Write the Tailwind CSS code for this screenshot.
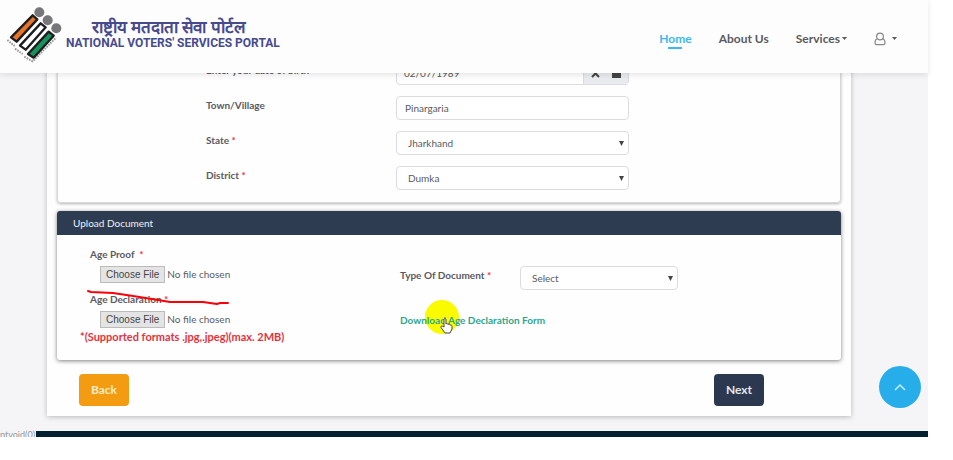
<!DOCTYPE html>
<html lang="en">
<head>
    <meta charset="UTF-8">
    <meta name="viewport" content="width=device-width, initial-scale=1.0">
    <script src="https://cdn.jsdelivr.net/npm/@tailwindcss/browser@4"></script>
    <title>National Voters' Services Portal</title>
</head>
<body class="bg-white pr-[25px] font-['Lato',sans-serif] text-[10px] text-[#5a5a60]">
    <div class="relative">
        <!-- Header -->
        <header class="relative z-10 flex h-[73px] items-center justify-between bg-[#fdfdfe] pr-[31px] pl-1 shadow-[0_2px_6px_rgba(0,0,0,0.1)]">
            <a href="#" class="flex items-center pb-1">
                <svg class="h-[63px] w-[62px]" viewBox="12 8 186 189" aria-hidden="true">
                    <g fill="none" stroke="#999" stroke-width="6" stroke-dasharray="5 3">
                        <path d="M22 119 L44 137"/>
                        <path d="M45 145 L68 161"/>
                        <path d="M73 169 L98 183 L168 112"/>
                    </g>
                    <g stroke="#1d1d1f" stroke-width="7" stroke-linejoin="round">
                        <path d="M98 45 L112 57 L50 124 L33 111Z" fill="#e8742a"/>
                        <path d="M122 69 L137 81 L77 148 L60 136Z" fill="#fff"/>
                        <path d="M146 94 L161 106 L101 172 L84 161Z" fill="#16935a"/>
                    </g>
                    <g fill="#77777b">
                        <circle cx="118" cy="36" r="15"/>
                        <circle cx="143" cy="60" r="15"/>
                        <circle cx="169" cy="84" r="15"/>
                    </g>
                </svg>
                <span class="flex flex-col pb-1 text-[#474b8e]">
                    <span lang="hi" class="pl-[26px] text-[17px] leading-5 font-semibold">राष्ट्रीय मतदाता सेवा पोर्टल</span>
                    <span class="font-['Liberation_Sans_Narrow','Roboto',sans-serif] text-[12px] leading-3 font-bold">NATIONAL VOTERS' SERVICES PORTAL</span>
                </span>
            </a>
            <nav class="flex items-center gap-[27px] pt-1 text-[12px] font-bold text-[#5a5a5e]">
                <a href="#" class="relative text-[#3db8ee]">Home<span class="absolute -bottom-px left-1/2 h-[2px] w-[14px] -translate-x-1/2 bg-[#3db8ee]"></span></a>
                <a href="#">About Us</a>
                <a href="#" class="flex items-center gap-[2px]">Services<svg class="h-[3px] w-[5px]" viewBox="0 0 5 3" fill="currentColor"><path d="M0 0h5L2.500 3z"/></svg></a>
                <a href="#" aria-label="Account" class="flex items-center gap-[6px]">
                    <svg class="h-[14px] w-[12px]" viewBox="0 0 12 14" fill="none" stroke="#888" stroke-width="1.200"><circle cx="6" cy="4.500" r="3.400"/><path d="M3 7C1.500 7.500 1 9 1 11c0 1 .6 1.700 1.500 1.700h7c.9 0 1.500-.7 1.500-1.700 0-2-.5-3.500-2-4"/></svg>
                    <svg class="h-[3px] w-[5px]" viewBox="0 0 5 3" fill="currentColor"><path d="M0 0h5L2.500 3z"/></svg>
                </a>
            </nav>
        </header>

        <main class="bg-[#f5f4f7] pr-[77px] pb-[15px] pl-[47px]">
            <form class="bg-[#fefefe] px-[10px] pb-[10px] shadow-[0_1px_5px_rgba(0,0,0,0.25)]">
                <!-- Address -->
                <section class="-mt-3 flex flex-col gap-[11px] rounded-b border border-t-0 border-[#d8d8da] pb-3 shadow-[0_1px_3px_rgba(0,0,0,0.3)]">
                    <div class="grid grid-cols-[148fr_190fr_233fr_211fr] items-start">
                        <label for="dob" class="col-start-2 leading-[18px] font-bold">Enter your date of birth</label>
                        <div class="flex h-6 rounded-sm border border-[#dcdce0]">
                            <input id="dob" type="text" value="02/07/1989" class="w-full min-w-0 px-[7px]">
                            <span class="flex items-center gap-3 border-l border-[#dcdce0] bg-[#e9ebee] px-[7px] text-[#444]">
                                <svg class="h-[9px] w-[9px]" viewBox="0 0 9 9" stroke="currentColor" stroke-width="2"><path d="M1 1l7 7M8 1L1 8"/></svg>
                                <svg class="h-[9px] w-[9px]" viewBox="0 0 9 9" fill="currentColor"><path d="M0 1h9v2H0zM0 4h9v5H0z"/></svg>
                            </span>
                        </div>
                    </div>
                    <div class="grid grid-cols-[148fr_190fr_233fr_211fr] items-start">
                        <label for="town" class="col-start-2 leading-[18px] font-bold">Town/Village</label>
                        <input id="town" type="text" value="Pinargaria" class="h-6 w-full min-w-0 rounded-sm border border-[#dcdce0] bg-white px-2">
                    </div>
                    <div class="grid grid-cols-[148fr_190fr_233fr_211fr] items-start">
                        <label for="state" class="col-start-2 leading-[18px] font-bold">State <span class="text-[#e8304a]">*</span></label>
                        <div class="relative">
                            <select id="state" class="h-6 w-full appearance-none rounded-sm border border-[#dcdce0] bg-white px-[11px]">
                                <option>Jharkhand</option>
                            </select>
                            <svg class="pointer-events-none absolute top-[10px] right-[5px] h-[5px] w-[5px]" viewBox="0 0 5 5" fill="#444"><path d="M0 0h5L2.500 5z"/></svg>
                        </div>
                    </div>
                    <div class="grid grid-cols-[148fr_190fr_233fr_211fr] items-start">
                        <label for="district" class="col-start-2 leading-[18px] font-bold">District<span class="text-[#e8304a]"> *</span></label>
                        <div class="relative">
                            <select id="district" class="h-6 w-full appearance-none rounded-sm border border-[#dcdce0] bg-white px-[11px]">
                                <option>Dumka</option>
                            </select>
                            <svg class="pointer-events-none absolute top-[10px] right-[5px] h-[5px] w-[5px]" viewBox="0 0 5 5" fill="#444"><path d="M0 0h5L2.500 5z"/></svg>
                        </div>
                    </div>
                </section>

                <!-- Upload document -->
                <section class="mt-2 rounded-[3px] bg-[#fefefe] shadow-[0_1px_4px_rgba(0,0,0,0.5)]">
                    <h2 class="rounded-t-[3px] bg-[#2d3c50] px-4 leading-6 text-[#f0f2f5]">Upload Document</h2>
                    <div class="grid grid-cols-[343fr_441fr]">
                        <div class="relative pt-[11px] pb-4 pl-[33px]">
                            <label for="proof" class="block leading-4 font-bold">Age Proof &nbsp;<span class="text-[#e8304a]">*</span></label>
                            <input id="proof" type="file" class="mt-1 ml-[10px] block h-[17px] w-[200px] text-[10px] leading-[15px] file:mr-[2px] file:h-[17px] file:border file:border-[#bbb] file:bg-[#e4e4e4] file:px-[5px] file:font-['Liberation_Sans'] file:text-[10px] file:text-[#444]">
                            <label for="declaration" class="mt-2 block leading-4 font-bold">Age Declaration <span class="text-[#e8304a]">*</span></label>
                            <input id="declaration" type="file" class="mt-1 ml-[10px] block h-[17px] w-[200px] text-[10px] leading-[15px] file:mr-[2px] file:h-[17px] file:border file:border-[#bbb] file:bg-[#e4e4e4] file:px-[5px] file:font-['Liberation_Sans'] file:text-[10px] file:text-[#444]">
                            <p class="mt-[2px] -ml-[10px] leading-[14px] font-bold text-[11px] text-[#e8303c]">*(Supported formats .jpg,.jpeg)(max. 2MB)</p>
                            <svg class="pointer-events-none absolute top-[53px] left-[29px] h-[18px] w-[144px]" viewBox="0 0 144 18" fill="none" stroke="#fb0007" stroke-width="2" stroke-linecap="round" stroke-linejoin="round"><path d="M2 3l3 1 22 1 20 3 25 4 12 2h33l14 2 3-1 8 0"/></svg>
                        </div>
                        <div class="pt-[31px]">
                            <div class="flex items-start">
                                <label for="doctype" class="w-[120px] leading-[18px] font-bold">Type Of Document <span class="text-[#e8304a]">*</span></label>
                                <div class="relative w-[158px]">
                                    <select id="doctype" class="h-6 w-full appearance-none rounded-sm border border-[#dcdce0] bg-white px-[11px]">
                                        <option>Select</option>
                                    </select>
                                    <svg class="pointer-events-none absolute top-[10px] right-[5px] h-[5px] w-[5px]" viewBox="0 0 5 5" fill="#444"><path d="M0 0h5L2.500 5z"/></svg>
                                </div>
                            </div>
                            <a href="#" class="relative mt-[22px] inline-block leading-4 font-bold text-[#2fa58c]">
                                <span class="absolute -top-3 left-[25px] size-[34px] rounded-full bg-[#fafa00]"></span>
                                <span class="relative">Download Age Declaration Form</span>
                                <svg class="absolute top-[6px] left-10 h-[16px] w-[13px]" viewBox="0 0 13 16" fill="#fff" stroke="#444" stroke-width="1" stroke-linejoin="round"><path d="M4 9V2c0-2 2-2 2 0v4c1-1 2 0 2 .5 1-.8 2 0 2 .7 1-.6 2 0 2 1V11l-2 4H5L1 9.500C.5 8 2 7.500 4 9z"/></svg>
                            </a>
                        </div>
                    </div>
                </section>

                <div class="mt-[14px] flex justify-between pr-[77px] pl-[22px]">
                    <button type="button" class="h-8 w-[50px] rounded-sm bg-[#f39c12] text-[12px] font-bold text-[#fdebc9]">Back</button>
                    <button type="submit" class="h-8 w-[50px] rounded-sm bg-[#2c3850] text-[12px] font-bold text-[#e4e8ee]">Next</button>
                </div>
            </form>
        </main>

        <footer class="h-[6px] bg-[#02202f]"></footer>

        <!-- Browser status text -->
        <div class="absolute bottom-0 left-0 h-[7px] w-9 overflow-hidden bg-[#f4f4f5] text-[9px] leading-[10px] text-[#999]">ptvoid(0)</div>

        <button type="button" aria-label="Scroll to top" class="absolute right-[7px] bottom-[29px] flex size-[42px] items-center justify-center rounded-full bg-[#27aeea]">
            <svg class="h-2 w-3" viewBox="0 0 12 8" fill="none" stroke="#c4edff" stroke-width="1.500"><path d="M1 7l5-5 5 5"/></svg>
        </button>
    </div>
</body>
</html>
